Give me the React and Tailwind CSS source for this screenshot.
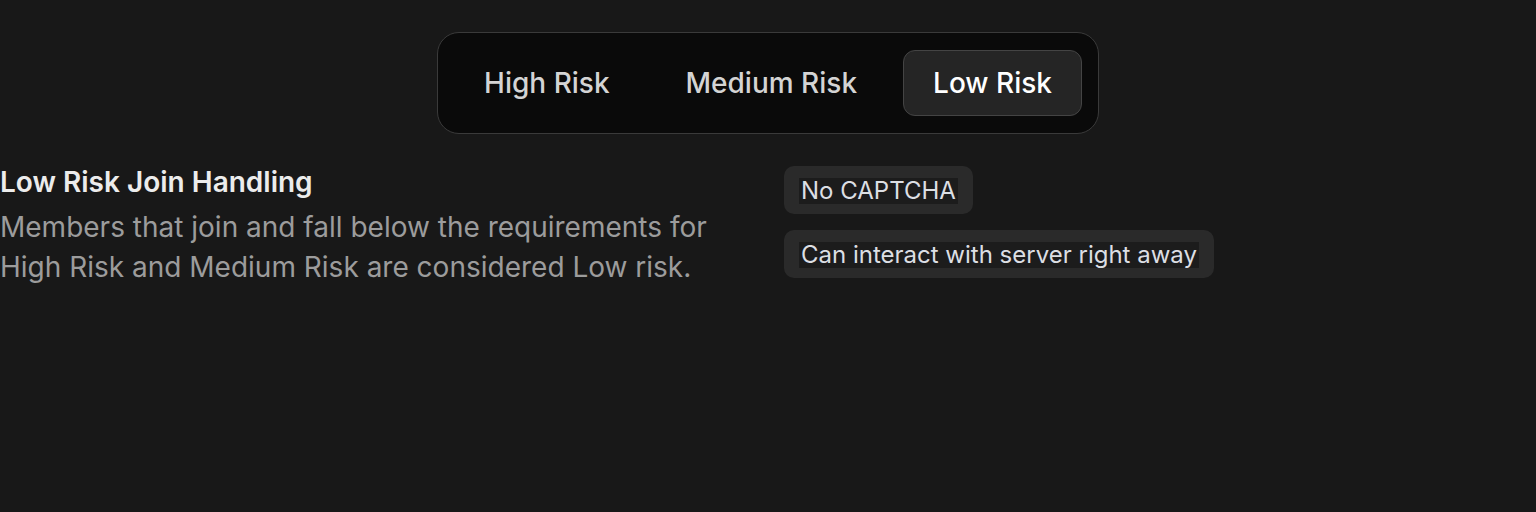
import React from "react";

const tabs = ["High Risk", "Medium Risk", "Low Risk"];

export default function App() {
  const active = "Low Risk";
  return (
    <div
      className="min-h-[512px] w-full bg-[#181818] text-white"
      style={{ fontFamily: "Inter, 'Noto Sans', sans-serif" }}
    >
      <div className="flex justify-center pt-8">
        <div className="flex gap-4 rounded-[22px] border border-[#3a3a3a] bg-[#0a0a0a] px-4 py-[17px]">
          {tabs.map((t) => (
            <button
              key={t}
              className={`h-[66px] rounded-xl border px-[29px] text-[28px] font-medium ${
                t === active
                  ? "border-[#444444] bg-[#252525] text-white"
                  : "border-transparent text-[#d4d4d4]"
              }`}
            >
              {t}
            </button>
          ))}
        </div>
      </div>

      <div className="mt-8 grid grid-cols-2 gap-8">
        <div>
          <h3 className="text-[28px] font-semibold leading-[32px] text-[#ececec]">
            Low Risk Join Handling
          </h3>
          <p className="mt-[9px] text-[28px] leading-[40px] text-[#9c9c9c]">
            Members that join and fall below the requirements for High Risk and Medium Risk are considered Low risk.
          </p>
        </div>
        <div className="flex flex-col items-start gap-4">
          {["No CAPTCHA", "Can interact with server right away"].map((b) => (
            <div key={b} className="flex h-12 items-center rounded-[10px] bg-[#2a2a2a] px-[15px] pt-[2px]">
              <span className="bg-[#1c1c1c] px-0.5 text-[24px] leading-[26px] text-[#dcdfe4]">{b}</span>
            </div>
          ))}
        </div>
      </div>
    </div>
  );
}
